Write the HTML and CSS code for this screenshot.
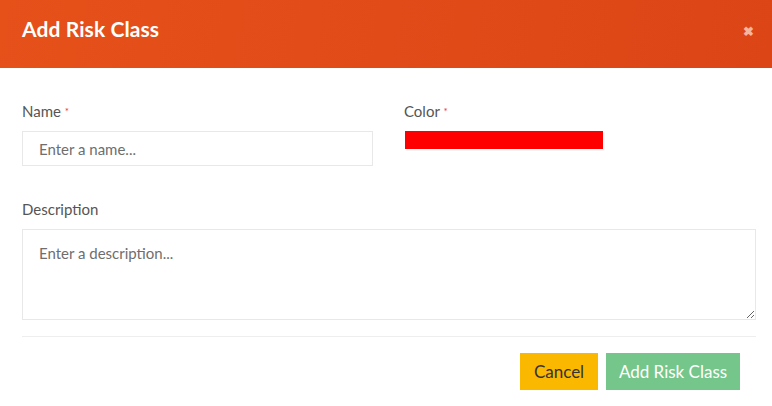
FILE: index.html
```html
<!DOCTYPE html>
<html>
<head>
<meta charset="utf-8">
<link rel="stylesheet" href="styles.css">
</head>
<body>
<div class="modal">
  <div class="modal-header">
    <h2 class="title">Add Risk Class</h2>
    <span class="close">&#10006;</span>
  </div>
  <div class="modal-body">
    <div class="row">
      <div class="field">
        <label class="label">Name <span class="req">*</span></label>
        <input class="input" type="text" placeholder="Enter a name...">
      </div>
      <div class="field">
        <label class="label">Color <span class="req">*</span></label>
        <div class="swatch"></div>
      </div>
    </div>
    <div class="field full">
      <label class="label">Description</label>
      <textarea class="textarea" placeholder="Enter a description..."></textarea>
    </div>
  </div>
  <div class="modal-footer">
    <button class="btn btn-cancel">Cancel</button>
    <button class="btn btn-add">Add Risk Class</button>
  </div>
</div>
</body>
</html>
```
FILE: styles.css
```css
* { box-sizing: border-box; }
html, body { margin: 0; padding: 0; background: #fff; }
body { font-family: "Lato", "Open Sans", sans-serif; color: #555; }
.modal { width: 772px; height: 406px; background: #fff; }
.modal-header {
  height: 68px;
  background: linear-gradient(100deg, #e65019 0%, #dc4617 100%);
  display: flex; align-items: center; justify-content: space-between;
  padding: 0 18px 0 22px;
}
.title { margin: 0; color: #fff; font-size: 21px; font-weight: 700; letter-spacing: 0.1px; position: relative; top: -6px; }
.close { color: #f3b79e; font-size: 13px; font-weight: 700; position: relative; top: -3px; }
.modal-body { padding: 34px 16px 0 22px; }
.row { display: flex; gap: 31px; }
.row .field { width: 351px; }
.label { display: block; font-size: 15px; color: #555; height: 19px; line-height: 19px; margin-bottom: 10px; }
.req { color: #e53935; font-size: 10px; vertical-align: top; }
.input {
  width: 351px; height: 35px; border: 1px solid #e8e8e8; padding: 0 16px;
  font-family: inherit; font-size: 15px; color: #555; outline: none;
}
.input::placeholder, .textarea::placeholder { color: #6e6e6e; }
.swatch { margin-left: 1px; width: 198px; height: 18px; background: #ff0000; margin-top: 1px; }
.full { margin-top: 34px; }
.textarea {
  display: block; width: 734px; height: 91px; border: 1px solid #e8e8e8; padding: 14px 16px;
  font-family: inherit; font-size: 15px; color: #555; resize: vertical; outline: none;
}
.modal-footer {
  margin: 16px 16px 0 22px; border-top: 1px solid #eeeeee;
  display: flex; justify-content: flex-end; gap: 8px; padding: 16px 16px 0 0;
}
.btn { border: none; height: 37px; font-family: inherit; font-size: 17px; padding: 0; }
.btn-cancel { background: #fbb800; color: #333; width: 78px; }
.btn-add { background: #74c68a; color: #fff; width: 134px; }
```
